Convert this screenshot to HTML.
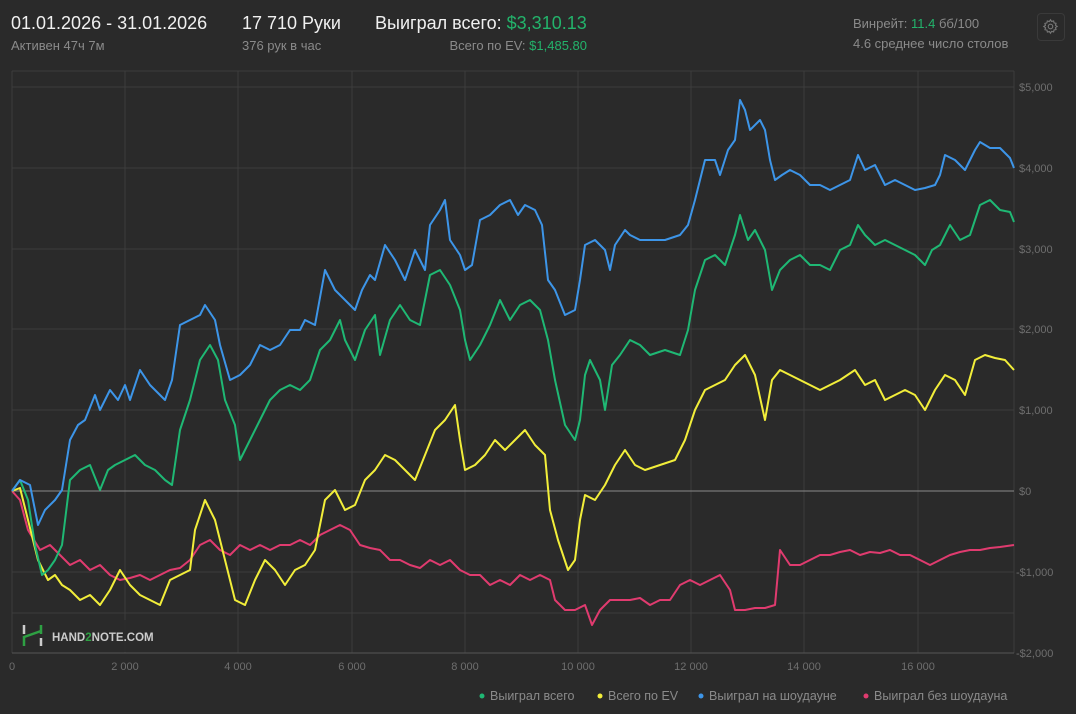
<!DOCTYPE html><html><head><meta charset="utf-8"><style>
body{margin:0;width:1076px;height:714px;background:#2a2a2a;font-family:"Liberation Sans",sans-serif;overflow:hidden;position:relative}
.t{position:absolute;white-space:nowrap}
.w{color:#f0f0f0;font-size:18px}
.g{color:#8a8a8a;font-size:13px}
.gr{color:#23b36b}
</style></head><body>
<div class="t w" style="left:11px;top:13px">01.01.2026 - 31.01.2026</div>
<div class="t g" style="left:11px;top:38px">Активен 47ч 7м</div>
<div class="t w" style="left:242px;top:13px">17 710 Руки</div>
<div class="t g" style="left:242px;top:38px">376 рук в час</div>
<div class="t w" style="left:375px;top:13px">Выиграл всего: <span class="gr">$3,310.13</span></div>
<div class="t g" style="right:489px;top:38px">Всего по EV: <span class="gr">$1,485.80</span></div>
<div class="t g" style="left:853px;top:16px">Винрейт: <span class="gr">11.4</span> бб/100</div>
<div class="t g" style="left:853px;top:36px">4.6 среднее число столов</div>
<div style="position:absolute;left:1037px;top:13px;width:26px;height:26px;border:1px solid #3a3a3a;border-radius:4px"></div>
<svg style="position:absolute;left:1042px;top:18px" width="17" height="17" viewBox="0 0 24 24" fill="none" stroke="#777" stroke-width="1.6"><circle cx="12" cy="12" r="3.2"/><path d="M12 2.5l1.6 2.4 2.8-.8.6 2.8 2.8.6-.8 2.8 2.4 1.6-2.4 1.6.8 2.8-2.8.6-.6 2.8-2.8-.8L12 21.5l-1.6-2.4-2.8.8-.6-2.8-2.8-.6.8-2.8L2.5 12l2.4-1.6-.8-2.8 2.8-.6.6-2.8 2.8.8z"/></svg>
<svg style="position:absolute;left:0;top:0" width="1076" height="714">
<g stroke="#3c3c3c" stroke-width="1">
<line x1="12" y1="71" x2="1014" y2="71"/>
<line x1="12" y1="87" x2="1014" y2="87"/><line x1="12" y1="168" x2="1014" y2="168"/><line x1="12" y1="249" x2="1014" y2="249"/><line x1="12" y1="329" x2="1014" y2="329"/><line x1="12" y1="410" x2="1014" y2="410"/><line x1="12" y1="572" x2="1014" y2="572"/><line x1="12" y1="613" x2="1014" y2="613"/>
<line x1="12" y1="71" x2="12" y2="653"/><line x1="125" y1="71" x2="125" y2="653"/><line x1="238" y1="71" x2="238" y2="653"/><line x1="352" y1="71" x2="352" y2="653"/><line x1="465" y1="71" x2="465" y2="653"/><line x1="578" y1="71" x2="578" y2="653"/><line x1="691" y1="71" x2="691" y2="653"/><line x1="804" y1="71" x2="804" y2="653"/><line x1="918" y1="71" x2="918" y2="653"/><line x1="1014" y1="71" x2="1014" y2="653"/>
</g>
<line x1="12" y1="653" x2="1014" y2="653" stroke="#555"/>
<line x1="12" y1="491" x2="1014" y2="491" stroke="#8a8a8a"/>
<g font-size="11" fill="#6e6e6e" font-family="Liberation Sans">
<text x="1019" y="91">$5,000</text><text x="1019" y="172">$4,000</text><text x="1019" y="253">$3,000</text><text x="1019" y="333">$2,000</text><text x="1019" y="414">$1,000</text><text x="1019" y="495">$0</text><text x="1016" y="576">-$1,000</text><text x="1016" y="657">-$2,000</text>
<g text-anchor="middle"><text x="12" y="670">0</text><text x="125" y="670">2 000</text><text x="238" y="670">4 000</text><text x="352" y="670">6 000</text><text x="465" y="670">8 000</text><text x="578" y="670">10 000</text><text x="691" y="670">12 000</text><text x="804" y="670">14 000</text><text x="918" y="670">16 000</text></g>
</g>
<g fill="none" stroke-width="2" stroke-linejoin="round">
<polyline stroke="#e03b6f" points="12,491 20,500 28,530 40,550 50,545 60,555 70,565 80,560 90,570 100,565 110,575 120,580 130,578 140,575 150,580 160,575 170,570 180,568 190,560 200,545 210,540 220,550 230,555 240,545 250,550 260,545 270,550 280,545 290,545 300,540 310,545 320,535 330,530 340,525 350,530 360,545 370,548 380,550 390,560 400,560 410,565 420,568 430,560 440,565 450,560 460,570 470,575 480,575 490,585 500,580 510,585 520,575 530,580 540,575 550,580 555,600 565,610 575,610 585,605 592,625 600,610 610,600 620,600 630,600 640,598 650,605 660,600 670,600 680,585 690,580 700,585 710,580 720,575 730,590 735,610 745,610 755,608 765,608 775,605 780,550 790,565 800,565 810,560 820,555 830,555 840,552 850,550 860,555 870,552 880,553 890,550 900,555 910,555 920,560 930,565 940,560 950,555 960,552 970,550 980,550 990,548 1000,547 1014,545"/>
<polyline stroke="#f2ee3a" points="12,491 20,488 28,520 38,560 48,580 55,575 62,585 70,590 80,600 90,595 100,605 110,590 120,570 130,585 140,595 150,600 160,605 170,580 180,575 190,570 195,530 205,500 215,520 225,560 235,600 245,605 255,580 265,560 275,570 285,585 295,570 305,565 315,550 325,500 335,490 345,510 355,505 365,480 375,470 385,455 395,460 405,470 415,480 425,455 435,430 445,420 455,405 460,440 465,470 475,465 485,455 495,440 505,450 515,440 525,430 535,445 545,455 550,510 558,540 568,570 575,560 580,520 585,495 595,500 605,485 615,465 625,450 635,465 645,470 660,465 675,460 685,440 695,410 705,390 715,385 725,380 735,365 745,355 755,375 765,420 772,380 780,370 790,375 800,380 810,385 820,390 830,385 840,380 855,370 865,385 875,380 885,400 895,395 905,390 915,395 925,410 935,390 945,375 955,380 965,395 975,360 985,355 995,358 1005,360 1014,370"/>
<polyline stroke="#1fb874" points="12,491 20,480 28,500 35,545 42,575 48,570 55,560 62,545 70,480 80,470 90,465 100,490 108,470 115,465 125,460 135,455 145,465 155,470 165,480 172,485 180,430 190,400 200,360 210,345 218,360 225,400 235,425 240,460 250,440 260,420 270,400 280,390 290,385 300,390 310,380 320,350 330,340 340,320 345,340 355,360 365,330 375,315 380,355 390,320 400,305 410,320 420,325 430,275 440,270 450,285 460,310 465,340 470,360 480,345 490,325 500,300 510,320 520,305 530,300 540,310 548,340 555,380 565,425 575,440 580,420 585,375 590,360 600,380 605,410 612,365 620,355 630,340 640,345 650,355 665,350 680,355 688,330 695,290 705,260 715,255 725,265 735,235 740,215 748,240 755,230 765,250 772,290 780,270 790,260 800,255 810,265 820,265 830,270 840,250 850,245 858,225 865,235 875,245 885,240 895,245 905,250 915,255 925,265 932,250 940,245 950,225 960,240 970,235 980,205 990,200 1000,210 1010,212 1014,222"/>
<polyline stroke="#3d95e8" points="12,491 20,480 30,485 38,525 45,510 55,500 62,490 70,440 78,425 85,420 95,395 100,410 110,390 118,400 125,385 130,400 140,370 150,385 160,395 165,400 172,380 180,325 190,320 200,315 205,305 215,320 220,345 230,380 240,375 250,365 260,345 270,350 280,345 290,330 300,330 305,320 315,325 325,270 335,290 345,300 355,310 362,290 370,275 375,280 385,245 395,260 405,280 415,250 425,270 430,225 440,210 445,200 450,240 460,255 465,270 472,265 480,220 490,215 500,205 510,200 518,215 525,205 535,210 542,225 548,280 555,290 565,315 575,310 580,280 585,245 595,240 605,250 610,270 615,245 625,230 630,235 640,240 650,240 665,240 680,235 688,225 695,200 700,180 705,160 715,160 720,175 728,150 735,140 740,100 745,110 750,130 760,120 765,130 770,160 775,180 782,175 790,170 800,175 810,185 820,185 830,190 840,185 850,180 858,155 865,170 875,165 885,185 895,180 905,185 915,190 925,188 935,185 940,175 945,155 955,160 965,170 975,150 980,142 990,148 1000,148 1010,158 1014,168"/>
</g>
<rect x="13" y="620" width="150" height="32" fill="#2a2a2a" opacity="0.9"/>
<g stroke-width="2.5"><line x1="24" y1="625" x2="24" y2="634" stroke="#ccc"/><line x1="24" y1="636" x2="24" y2="646" stroke="#2ea043"/><line x1="24" y1="637" x2="41" y2="631" stroke="#2ea043"/><line x1="41" y1="625" x2="41" y2="634" stroke="#2ea043"/><line x1="41" y1="638" x2="41" y2="646" stroke="#ccc"/></g>
<text x="52" y="641" font-size="11.5" font-weight="bold" fill="#ccc" font-family="Liberation Sans">HAND<tspan fill="#2ea043">2</tspan>NOTE.COM</text>
<g font-size="12.5" fill="#8a8a8a" font-family="Liberation Sans">
<circle cx="482" cy="696" r="2.5" fill="#1fb874"/><text x="490" y="700">Выиграл всего</text>
<circle cx="600" cy="696" r="2.5" fill="#f2ee3a"/><text x="608" y="700">Всего по EV</text>
<circle cx="701" cy="696" r="2.5" fill="#3d95e8"/><text x="709" y="700">Выиграл на шоудауне</text>
<circle cx="866" cy="696" r="2.5" fill="#e03b6f"/><text x="874" y="700">Выиграл без шоудауна</text>
</g>
</svg>
</body></html>
